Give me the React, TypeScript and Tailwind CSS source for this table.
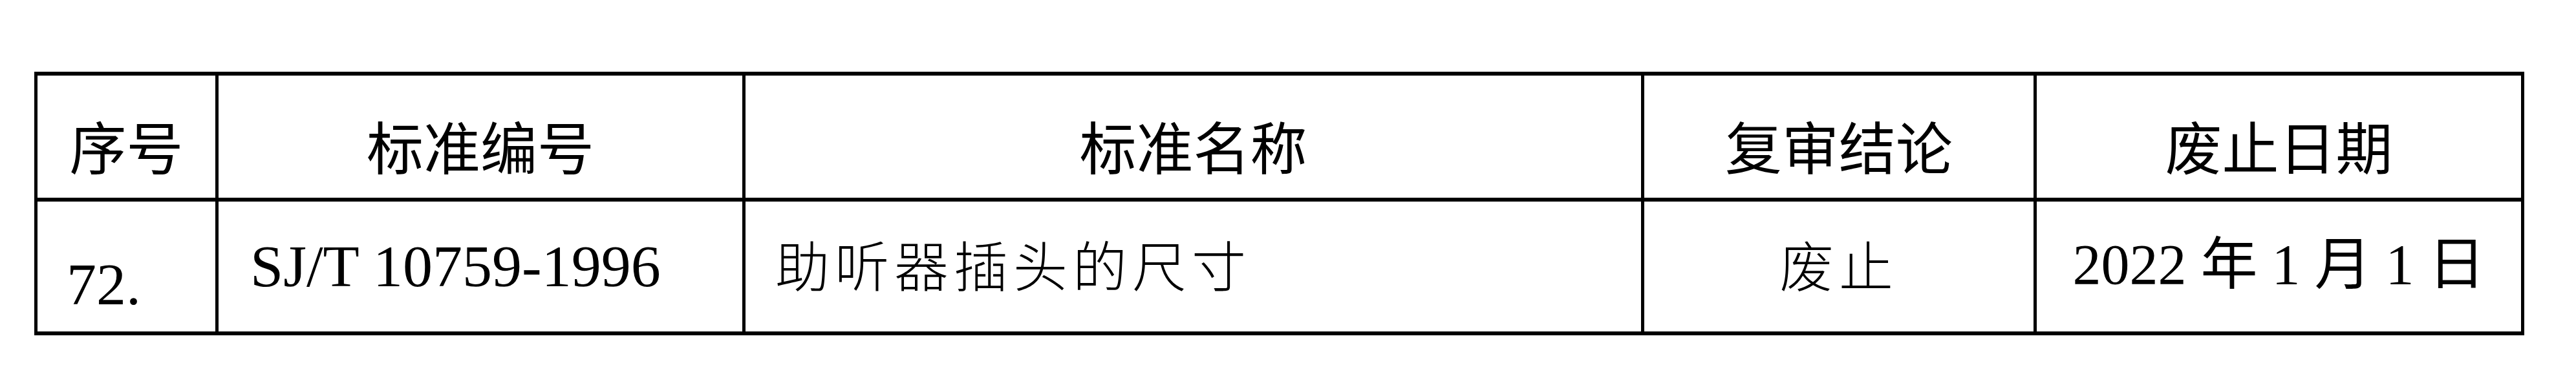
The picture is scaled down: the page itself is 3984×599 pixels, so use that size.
import React from 'react';

// one row of the standards review list
const headers = ['序号', '标准编号', '标准名称', '复审结论', '废止日期'];

const row = {
  no: '72.',
  code: 'SJ/T 10759-1996',
  name: '助听器插头的尺寸',
  result: '废止',
  date: '2022 年 1 月 1 日',
};

const cols = 'grid grid-cols-[280px_815px_1390px_607px_754px]';
const cell = 'border-r-[5px] border-b-[6px] border-black';

const App: React.FC = () => {
  return (
    <div className="min-h-[599px] w-[3984px] bg-white text-black">
      <div className="ml-[53px] pt-[111px]">
        <div className="w-fit border-l-[5px] border-t-[6px] border-black">
          {/* header row */}
          <div className={cols}>
            {headers.map((h) => (
              <div
                key={h}
                className={`${cell} h-[195px] flex justify-center pt-[63px] font-['Noto_Sans_CJK_SC',sans-serif] text-[88px] leading-none`}
              >
                {h}
              </div>
            ))}
          </div>

          {/* data row */}
          <div className={`${cols} font-['Liberation_Serif','Noto_Sans_CJK_SC',serif] leading-none`}>
            <div className={`${cell} h-[207px] pl-[45px] pt-[82px] text-[92px]`}>{row.no}</div>
            <div className={`${cell} h-[207px] pl-[49px] pt-[54px] text-[92px]`}>{row.code}</div>
            <div
              className={`${cell} h-[207px] pl-[46px] pt-[54px] text-[84px] tracking-[8px] font-['Noto_Sans_CJK_SC',sans-serif] font-light`}
            >
              {row.name}
            </div>
            <div
              className={`${cell} h-[207px] flex justify-center pt-[54px] text-[84px] tracking-[8px] font-['Noto_Sans_CJK_SC',sans-serif] font-light`}
            >
              {row.result}
            </div>
            <div className={`${cell} h-[207px] flex justify-center pt-[54px] text-[88px]`}>
              {row.date}
            </div>
          </div>
        </div>
      </div>
    </div>
  );
};

export default App;
